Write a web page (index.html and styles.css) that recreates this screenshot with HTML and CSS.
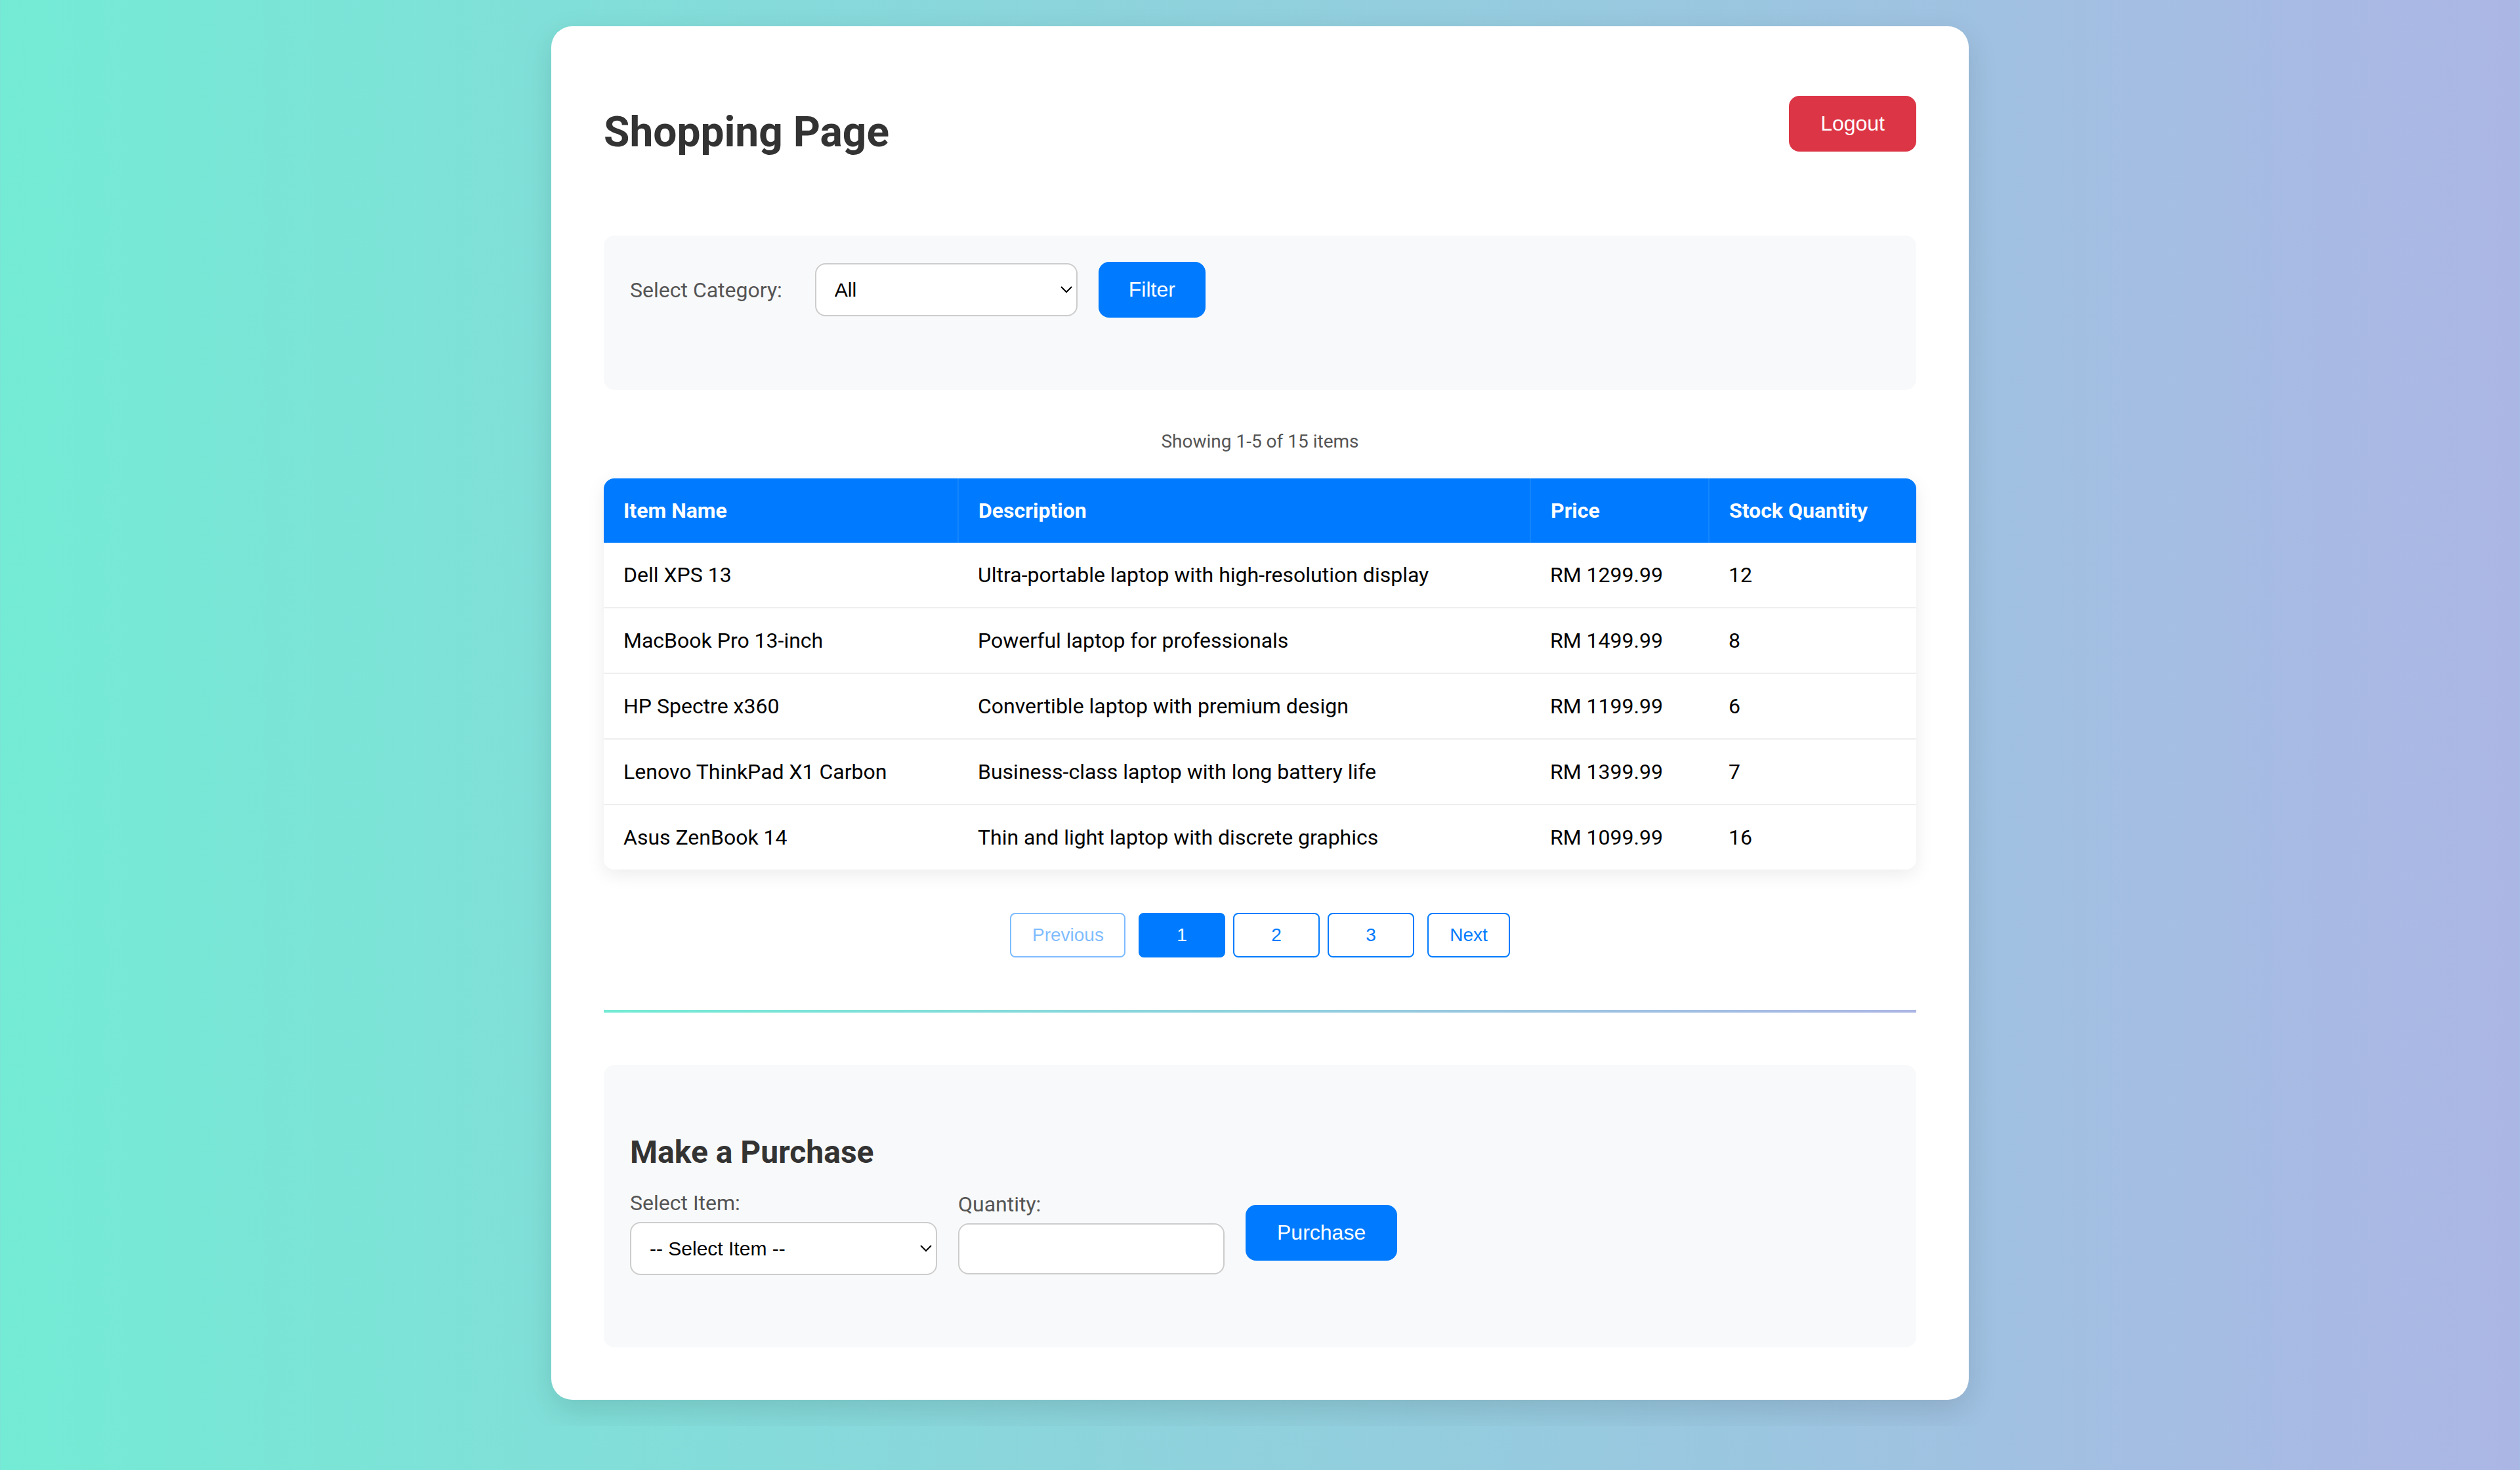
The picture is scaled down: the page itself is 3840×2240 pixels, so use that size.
FILE: index.html
```html
<!DOCTYPE html>
<html lang="en">
<head>
<meta charset="utf-8">
<title>Shopping Page</title>
<link rel="stylesheet" href="styles.css">
</head>
<body>
<div class="container">
  <div class="header">
    <h1 class="title">Shopping Page</h1>
    <button type="button" class="btn btn-danger">Logout</button>
  </div>

  <div class="panel filter-panel">
    <form class="filter-form">
      <label class="filter-label" for="category">Select Category:</label>
      <select id="category" class="select select-category">
        <option>All</option>
        <option>Laptops</option>
        <option>Phones</option>
      </select>
      <button type="button" class="btn btn-primary">Filter</button>
    </form>
  </div>

  <p class="showing">Showing 1-5 of 15 items</p>

  <div class="table-wrap">
    <table class="items">
      <thead>
        <tr>
          <th class="col-name">Item Name</th>
          <th class="col-desc">Description</th>
          <th class="col-price">Price</th>
          <th class="col-stock">Stock Quantity</th>
        </tr>
      </thead>
      <tbody>
        <tr><td>Dell XPS 13</td><td>Ultra-portable laptop with high-resolution display</td><td>RM 1299.99</td><td>12</td></tr>
        <tr><td>MacBook Pro 13-inch</td><td>Powerful laptop for professionals</td><td>RM 1499.99</td><td>8</td></tr>
        <tr><td>HP Spectre x360</td><td>Convertible laptop with premium design</td><td>RM 1199.99</td><td>6</td></tr>
        <tr><td>Lenovo ThinkPad X1 Carbon</td><td>Business-class laptop with long battery life</td><td>RM 1399.99</td><td>7</td></tr>
        <tr><td>Asus ZenBook 14</td><td>Thin and light laptop with discrete graphics</td><td>RM 1099.99</td><td>16</td></tr>
      </tbody>
    </table>
  </div>

  <div class="pagination">
    <button type="button" class="page-btn page-prev" disabled>Previous</button>
    <button type="button" class="page-btn page-num active">1</button>
    <button type="button" class="page-btn page-num">2</button>
    <button type="button" class="page-btn page-num">3</button>
    <button type="button" class="page-btn page-next">Next</button>
  </div>

  <hr class="divider">

  <div class="panel purchase-panel">
    <h2 class="section-title">Make a Purchase</h2>
    <form class="purchase-form">
      <div class="field">
        <label class="field-label" for="item">Select Item:</label>
        <select id="item" class="select select-item">
          <option>-- Select Item --</option>
          <option>Dell XPS 13</option>
          <option>MacBook Pro 13-inch</option>
          <option>HP Spectre x360</option>
          <option>Lenovo ThinkPad X1 Carbon</option>
          <option>Asus ZenBook 14</option>
        </select>
      </div>
      <div class="field">
        <label class="field-label" for="qty">Quantity:</label>
        <input id="qty" type="text" class="input input-qty">
      </div>
      <button type="button" class="btn btn-primary">Purchase</button>
    </form>
  </div>
</div>
</body>
</html>
```

FILE: styles.css
```css
html {
  zoom: 2;
  background: linear-gradient(to right, #74ebd5, #acb6e5);
}

body {
  margin: 0;
  padding: 20px 0;
  font-family: Roboto, "Liberation Sans", Arial, sans-serif;
  color: #000;
}

.container {
  width: 1000px;
  margin: 0 auto;
  padding: 40px;
  background: #fff;
  border-radius: 16px;
  box-shadow: 0 8px 24px rgba(0, 0, 0, 0.12);
}

.header {
  display: flex;
  justify-content: space-between;
  align-items: center;
  margin-bottom: 51px;
}

.title {
  font-size: 32px;
  font-weight: 700;
  color: #333;
  margin: 22px 0 9px;
}

.btn {
  font-family: "Liberation Sans", Arial, sans-serif;
  font-size: 16px;
  line-height: normal;
  padding: 12px 24px;
  border: none;
  border-radius: 8px;
  color: #fff;
  cursor: pointer;
}

.btn-danger {
  background: #dc3545;
}

.btn-primary {
  background: #007bff;
}

.panel {
  background: #f8f9fa;
  border-radius: 8px;
  padding: 20px 20px 55px;
}

.filter-form {
  display: flex;
  align-items: center;
  gap: 16px;
}

.filter-label {
  font-size: 16px;
  color: #555;
  margin-right: 9px;
}

.select,
.input {
  font-family: "Liberation Sans", Arial, sans-serif;
  font-size: 15px;
  padding: 10px;
  border: 1px solid #ccc;
  border-radius: 8px;
  background: #fff;
  color: #000;
  box-sizing: border-box;
}

.select-category {
  width: 200px;
}

.filter-form .btn-primary {
  padding-left: 23px;
  padding-right: 23px;
}

.showing {
  text-align: center;
  font-size: 14px;
  color: #555;
  margin: 31px 0 20px;
}

.table-wrap {
  border-radius: 8px;
  overflow: hidden;
  box-shadow: 0 4px 14px rgba(0, 0, 0, 0.08);
}

.items {
  width: 100%;
  border-collapse: collapse;
  table-layout: fixed;
  font-size: 16px;
}

.items th {
  box-sizing: border-box;
  background: #007bff;
  color: #fff;
  font-weight: 700;
  text-align: left;
  padding: 15px;
  border-left: 1px solid rgba(255, 255, 255, 0.08);
}

.items th:first-child {
  border-left: none;
}

.col-name { width: 270px; }
.col-desc { width: 436px; }
.col-price { width: 136px; }
.col-stock { width: 158px; }

.items td {
  padding: 15px;
  background: #fff;
  border-bottom: 1px solid #eee;
  color: #000;
}

.items tbody tr:last-child td {
  border-bottom: none;
}

.pagination {
  display: flex;
  justify-content: center;
  gap: 6px;
  margin-top: 33px;
}

.page-btn {
  font-family: "Liberation Sans", Arial, sans-serif;
  font-size: 14px;
  line-height: normal;
  padding: 8px 16px;
  border: 1px solid #007bff;
  border-radius: 4px;
  background: #fff;
  color: #007bff;
  cursor: pointer;
}

.page-num {
  width: 66px;
}

.page-btn.active {
  background: #007bff;
  color: #fff;
}

.page-btn:disabled {
  opacity: 0.5;
  cursor: default;
}

.page-prev {
  width: 88px;
  margin-right: 4px;
}

.page-next {
  width: 63px;
  margin-left: 4px;
}

.divider {
  border: none;
  height: 2px;
  margin: 40px 0;
  background: linear-gradient(to right, #74ebd5, #acb6e5);
}

.section-title {
  font-size: 24px;
  font-weight: 700;
  color: #333;
  margin: 32px 0 15px;
}

.purchase-form {
  display: flex;
  align-items: center;
  gap: 16px;
}

.field-label {
  display: block;
  font-size: 16px;
  color: #555;
  margin-bottom: 5px;
}

.select-item {
  width: 234px;
}

.input-qty {
  width: 203px;
}
```
